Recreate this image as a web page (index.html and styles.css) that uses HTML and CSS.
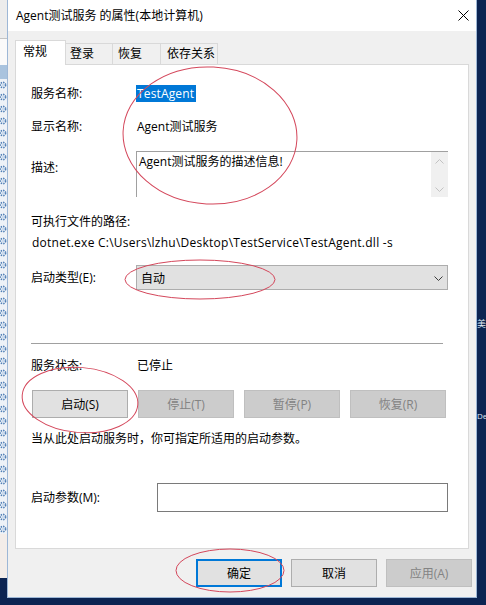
FILE: index.html
```html
<!DOCTYPE html>
<html lang="zh-CN">
<head>
<meta charset="utf-8">
<title>Agent测试服务 的属性(本地计算机)</title>
<link rel="stylesheet" href="styles.css">
</head>
<body>
<div class="screen">
  <div class="desktop">
    <div class="strip-left">
      <div class="sl-top"></div>
      <div class="sl-line"></div>
      <div class="sl-white"></div>
      <div class="sl-band"></div>
      <svg class="sl-gears" width="7" height="455" viewBox="0 0 7 455">
        <defs>
          <pattern id="gear" width="7" height="12" patternUnits="userSpaceOnUse">
            <circle cx="3" cy="6" r="2.6" fill="none" stroke="#4f7fb6" stroke-width="1.6" stroke-dasharray="1.4 1"/>
            <circle cx="3" cy="6" r="0.8" fill="#9bbbe0"/>
          </pattern>
        </defs>
        <rect width="7" height="455" fill="#eef2f7"/>
        <rect width="7" height="455" fill="url(#gear)"/>
      </svg>
      <div class="sl-rest"></div>
      <div class="sl-bottom"></div>
    </div>

    <div class="window">
      <div class="titlebar">
        <span class="title">Agent测试服务 的属性(本地计算机)</span>
        <svg class="close" width="11" height="11" viewBox="0 0 11 11">
          <path d="M0.5 0.5 L10.5 10.5 M10.5 0.5 L0.5 10.5" stroke="#000" stroke-width="1" fill="none"/>
        </svg>
      </div>
      <div class="client">
        <div class="tabs">
          <div class="tab active">常规</div>
          <div class="tab t-login">登录</div>
          <div class="tab t-recover">恢复</div>
          <div class="tab t-deps">依存关系</div>
        </div>
        <div class="panel">
          <div class="row r-name">
            <span class="label">服务名称:</span>
            <span class="value"><span class="sel">TestAgent</span></span>
          </div>
          <div class="row r-display">
            <span class="label">显示名称:</span>
            <span class="value">Agent测试服务</span>
          </div>
          <div class="row r-desc">
            <span class="label lbl-desc">描述:</span>
            <div class="desc">
              <div class="desc-text">Agent测试服务的描述信息!</div>
              <div class="vscroll">
                <svg width="9" height="5" viewBox="0 0 9 5"><path d="M0.5 4.5 L4.5 0.5 L8.5 4.5" stroke="#c2c2c2" stroke-width="1" fill="none"/></svg>
                <svg width="9" height="5" viewBox="0 0 9 5"><path d="M0.5 0.5 L4.5 4.5 L8.5 0.5" stroke="#c2c2c2" stroke-width="1" fill="none"/></svg>
              </div>
            </div>
          </div>
          <div class="line r-pathlabel">可执行文件的路径:</div>
          <div class="line r-path">dotnet.exe C:\Users\lzhu\Desktop\TestService\TestAgent.dll -s</div>
          <div class="row r-type">
            <span class="label">启动类型(E):</span>
            <div class="combo">
              <span>自动</span>
              <svg width="9" height="5" viewBox="0 0 9 5"><path d="M0.5 0.5 L4.5 4.5 L8.5 0.5" stroke="#3c3c3c" stroke-width="1" fill="none"/></svg>
            </div>
          </div>
          <div class="sep"></div>
          <div class="row r-status">
            <span class="label">服务状态:</span>
            <span class="value">已停止</span>
          </div>
          <div class="svc-buttons">
            <div class="btn">启动(S)</div>
            <div class="btn disabled">停止(T)</div>
            <div class="btn disabled">暂停(P)</div>
            <div class="btn disabled">恢复(R)</div>
          </div>
          <div class="line r-hint">当从此处启动服务时，你可指定所适用的启动参数。</div>
          <div class="row r-args">
            <span class="label wide">启动参数(M):</span>
            <div class="textbox"></div>
          </div>
        </div>
        <div class="dlg-buttons">
          <div class="btn dlg default">确定</div>
          <div class="btn dlg">取消</div>
          <div class="btn dlg disabled">应用(A)</div>
        </div>
      </div>
    </div>

    <div class="strip-right">
      <span class="frag f1">美</span>
      <span class="frag f3">De</span>
    </div>
  </div>

  <svg class="annot" width="486" height="605" viewBox="0 0 486 605">
    <g fill="none" stroke="#d4475b" stroke-width="1">
      <ellipse cx="210" cy="135.5" rx="87" ry="68.5" transform="rotate(3 210 135.5)"/>
      <ellipse cx="200" cy="279.5" rx="75" ry="19.5"/>
      <ellipse cx="80" cy="400" rx="58" ry="32.5" transform="rotate(5 80 400)"/>
      <ellipse cx="230" cy="570.5" rx="54" ry="21.5"/>
    </g>
  </svg>
</div>
</body>
</html>
```

FILE: styles.css
```css
* {
  box-sizing: border-box;
}

html,
body {
  margin: 0;
  padding: 0;
}

body {
  width: 486px;
  height: 605px;
  overflow: hidden;
  background: #0c2452;
  font-family: "Open Sans", "Noto Sans CJK SC", sans-serif;
  font-size: 12px;
  color: #000;
}

.screen {
  position: relative;
  width: 486px;
  height: 605px;
  overflow: hidden;
  background: #0c2452;
}

.desktop {
  display: flex;
  height: 598px;
}

/* left background strip */
.strip-left {
  width: 7px;
  flex: none;
  display: flex;
  flex-direction: column;
}

.sl-top {
  height: 38px;
  background: #ececec;
}

.sl-line {
  height: 1px;
  background: #c4c4c4;
}

.sl-white {
  height: 26px;
  background: #fafafa;
}

.sl-band {
  height: 14px;
  background: #a9c3de;
}

.sl-gears {
  display: block;
  flex: none;
}

.sl-rest {
  flex: 1;
  background: #f3ede9;
}

.sl-bottom {
  height: 20px;
  background: #0c2452;
}

/* window */
.window {
  width: 470px;
  flex: none;
  display: flex;
  flex-direction: column;
  border: 1px solid #9db7d6;
  border-top: none;
  background: #f0f0f0;
}

.titlebar {
  height: 31px;
  flex: none;
  background: #fff;
  display: flex;
  align-items: center;
  justify-content: space-between;
  padding: 0 7px 0 8px;
}

.title {
  line-height: 17px;
}

.close {
  display: block;
}

.client {
  flex: 1;
  padding: 9px 0 0 7px;
}

/* tabs */
.tabs {
  display: flex;
  align-items: flex-end;
  height: 24px;
}

.tab {
  height: 21px;
  line-height: 20px;
  border: 1px solid #d9d9d9;
  border-bottom: none;
  background: #f0f0f0;
  margin-left: -1px;
}

.tab.active {
  position: relative;
  z-index: 1;
  width: 51px;
  height: 25px;
  margin-left: 0;
  margin-bottom: -1px;
  padding: 2px 0 0 7px;
  line-height: 17px;
  background: #fff;
}

.t-login {
  width: 48px;
  padding-left: 4px;
}

.t-recover {
  width: 49px;
  padding-left: 5px;
}

.t-deps {
  width: 58px;
  padding-left: 6px;
}

/* panel */
.panel {
  width: 454px;
  height: 485px;
  border: 1px solid #d9d9d9;
  background: #fff;
  padding: 0 20px 0 15px;
}

.row {
  display: flex;
  align-items: center;
}

.label {
  width: 106px;
  flex: none;
  line-height: 17px;
}

.label.wide {
  width: 126px;
}

.value {
  line-height: 17px;
}

.line {
  line-height: 17px;
}

.r-name {
  margin-top: 20px;
  height: 17px;
}

.sel {
  display: inline-block;
  background: #0078d7;
  color: #fff;
  padding: 0 2px 0 1px;
  margin-left: -1px;
  line-height: 17px;
  letter-spacing: 0.15px;
}

.r-display {
  margin-top: 16px;
  height: 17px;
}

.r-desc {
  margin-top: 16px;
  align-items: flex-start;
}

.lbl-desc {
  margin-top: 8px;
}

.desc {
  flex: 1;
  height: 46px;
  margin-left: -1px;
  display: flex;
  border-top: 1px solid #a0a0a0;
  border-left: 1px solid #a0a0a0;
}

.desc-text {
  flex: 1;
  padding: 1px 0 0 2px;
  line-height: 17px;
}

.vscroll {
  width: 17px;
  flex: none;
  background: #f0f0f0;
  display: flex;
  flex-direction: column;
  align-items: center;
  justify-content: space-between;
  padding: 7px 0 5px 0;
}

.vscroll svg {
  display: block;
}

.r-pathlabel {
  margin-top: 16px;
}

.r-path {
  margin-top: 4px;
  padding-left: 1px;
  letter-spacing: 0.25px;
}

.r-type {
  margin-top: 14px;
}

.combo {
  flex: 1;
  height: 25px;
  margin-left: -1px;
  background: #e1e1e1;
  border: 1px solid #adadad;
  display: flex;
  align-items: center;
  justify-content: space-between;
  padding: 1px 4px 0 4px;
}

.combo svg {
  display: block;
  margin-top: 1px;
}

.sep {
  margin-top: 53px;
  margin-right: 5px;
  height: 2px;
  border-top: 1px solid #a0a0a0;
  border-bottom: 1px solid #fff;
}

.r-status {
  margin-top: 12px;
  height: 17px;
}

.svc-buttons {
  margin-top: 16px;
  margin-left: 1px;
  display: flex;
  gap: 10px;
}

.btn {
  width: 96px;
  height: 28px;
  display: flex;
  align-items: center;
  justify-content: center;
  background: #e1e1e1;
  border: 1px solid #adadad;
  line-height: 17px;
}

.btn.disabled {
  background: #cccccc;
  border-color: #bfbfbf;
  color: #838383;
}

.r-hint {
  margin-top: 12px;
}

.r-args {
  margin-top: 36px;
}

.textbox {
  flex: 1;
  height: 29px;
  border: 1px solid #7a7a7a;
  background: #fff;
}

/* dialog buttons */
.dlg-buttons {
  display: flex;
  justify-content: flex-end;
  gap: 9px;
  margin-top: 10px;
  padding-right: 4px;
}

.btn.dlg {
  width: 86px;
}

.btn.default {
  border: 2px solid #0078d7;
}

/* right background strip */
.strip-right {
  flex: 1;
  overflow: hidden;
  background: #0c2452;
  padding-top: 318px;
  display: flex;
  flex-direction: column;
}

.frag {
  display: block;
  color: #dfe6f0;
  line-height: 12px;
  font-size: 9px;
  white-space: nowrap;
}

.f3 {
  margin-top: 80px;
  font-size: 8px;
}

/* annotation overlay */
.annot {
  position: absolute;
  left: 0;
  top: 0;
  pointer-events: none;
}
```
